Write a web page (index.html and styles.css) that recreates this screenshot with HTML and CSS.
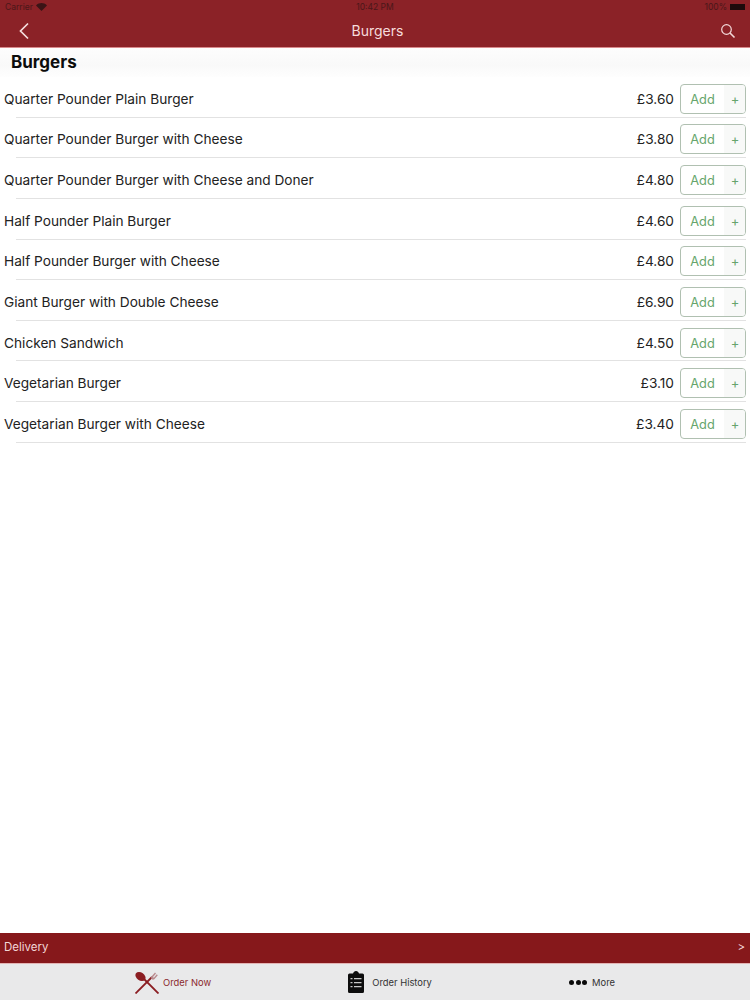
FILE: index.html
```html
<!DOCTYPE html>
<html lang="en">
<head>
  <meta charset="UTF-8">
  <title>Burgers</title>
  <link rel="stylesheet" href="styles.css">
</head>
<body>
  <div class="page">
    <header class="topbar">
      <div class="status">
        <span class="status-left">Carrier
          <svg class="wifi" width="11" height="8" viewBox="0 0 11 8"><path d="M5.500 8 0 2.400C3.200-.8 7.800-.8 11 2.400z" fill="#3a1416"/></svg>
        </span>
        <span class="status-time">10:42 PM</span>
        <span class="status-right">100%<span class="battery"></span></span>
      </div>
      <div class="nav">
        <svg class="nav-icon" width="12" height="18" viewBox="0 0 12 18"><path d="M10 1.500 2.500 9l7.500 7.500" fill="none" stroke="#f6dfdf" stroke-width="1.700"/></svg>
        <span class="nav-title">Burgers</span>
        <svg class="nav-icon" width="16" height="16" viewBox="0 0 16 16"><circle cx="6.500" cy="6.500" r="4.800" fill="none" stroke="#f3d9d9" stroke-width="1.200"/><path d="m10 10 4.500 4.500" stroke="#f3d9d9" stroke-width="1.600"/></svg>
      </div>
    </header>

    <h1 class="section-title">Burgers</h1>

    <ul class="menu">
      <li class="item"><span class="name">Quarter Pounder Plain Burger</span><span class="price">£3.60</span><button class="add"><span class="add-label">Add</span><span class="add-plus">+</span></button></li>
      <li class="item"><span class="name">Quarter Pounder Burger with Cheese</span><span class="price">£3.80</span><button class="add"><span class="add-label">Add</span><span class="add-plus">+</span></button></li>
      <li class="item"><span class="name">Quarter Pounder Burger with Cheese and Doner</span><span class="price">£4.80</span><button class="add"><span class="add-label">Add</span><span class="add-plus">+</span></button></li>
      <li class="item"><span class="name">Half Pounder Plain Burger</span><span class="price">£4.60</span><button class="add"><span class="add-label">Add</span><span class="add-plus">+</span></button></li>
      <li class="item"><span class="name">Half Pounder Burger with Cheese</span><span class="price">£4.80</span><button class="add"><span class="add-label">Add</span><span class="add-plus">+</span></button></li>
      <li class="item"><span class="name">Giant Burger with Double Cheese</span><span class="price">£6.90</span><button class="add"><span class="add-label">Add</span><span class="add-plus">+</span></button></li>
      <li class="item"><span class="name">Chicken Sandwich</span><span class="price">£4.50</span><button class="add"><span class="add-label">Add</span><span class="add-plus">+</span></button></li>
      <li class="item"><span class="name">Vegetarian Burger</span><span class="price">£3.10</span><button class="add"><span class="add-label">Add</span><span class="add-plus">+</span></button></li>
      <li class="item"><span class="name">Vegetarian Burger with Cheese</span><span class="price">£3.40</span><button class="add"><span class="add-label">Add</span><span class="add-plus">+</span></button></li>
    </ul>

    <div class="delivery"><span>Delivery</span><span>&gt;</span></div>

    <nav class="tabs">
      <a class="tab tab-active">
        <svg width="24" height="24" viewBox="0 0 24 24">
          <path d="M23.500 23.500 7 7" stroke="#8b1d22" stroke-width="1.800"/>
          <ellipse cx="5.500" cy="6.500" rx="5.500" ry="4" transform="rotate(35 5.500 6.500)" fill="#8b1d22"/>
          <path d="M.5 23.500 17 7" stroke="#8b1d22" stroke-width="1.800"/>
          <path d="m16 7 4-4.500 1 1-3 3.500.8.8 3-3.500 1 1-3.500 4c-1.500 1-3 .4-3.300-2.300z" fill="#b98a8d"/>
        </svg>
        <span>Order Now</span>
      </a>
      <a class="tab tab-history">
        <svg width="16" height="22" viewBox="0 0 16 22">
          <path d="M1.500 2.500H5C5.500 1 6.500 0 8 0s2.500 1 3 2.500h3.500A1.500 1.500 0 0 1 16 4v16.500a1.500 1.500 0 0 1-1.500 1.500h-13A1.500 1.500 0 0 1 0 20.500V4a1.500 1.500 0 0 1 1.500-1.500z" fill="#0d0d0d"/>
          <path d="M2.500 7h2v1.300h-2zM6 7h7.500v1.300H6zM2.500 11h2v1.300h-2zM6 11h7.500v1.300H6zM2.500 15h2v1.300h-2zM6 15h7.500v1.300H6z" fill="#c9c9c9"/>
        </svg>
        <span>Order History</span>
      </a>
      <a class="tab">
        <span class="dots"><i></i><i></i><i></i></span>
        <span>More</span>
      </a>
    </nav>
  </div>
</body>
</html>
```

FILE: styles.css
```css
* {
  box-sizing: border-box;
}
body {
  margin: 0;
  font-family: Inter, "Liberation Sans", sans-serif;
  color: #222;
  background-color: #fff;
}
.page {
  display: flex;
  flex-direction: column;
  height: 1000px;
}
.topbar {
  height: 48px;
  background-color: #8b2227;
  border-bottom: 1px solid #d98a8c;
  padding: 0 5px;
}
.status {
  display: flex;
  justify-content: space-between;
  align-items: center;
  height: 14px;
  font-size: 8.500px;
  color: #4a1719;
}
.status-left,
.status-right {
  display: flex;
  align-items: center;
  gap: 3px;
  width: 60px;
}
.status-right {
  justify-content: flex-end;
}
.battery {
  width: 15px;
  height: 6px;
  background-color: #1d0a0b;
}
.nav {
  display: flex;
  align-items: center;
  height: 33px;
  padding: 0 9px 0 13px;
}
.nav-title {
  flex: 1;
  padding-left: 5px;
  text-align: center;
  font-size: 14px;
  color: #f6dcdc;
}
.section-title {
  margin: 0;
  height: 29px;
  padding-left: 11px;
  font-size: 17px;
  line-height: 28px;
  font-weight: 700;
  color: #0c0c0c;
  background: linear-gradient(#fdfdfd, #f9f9f9 60%, #fefefe);
}
.menu {
  flex: 1;
  margin: 0;
  padding: 0;
  list-style: none;
}
.item {
  display: flex;
  align-items: center;
  height: 40.630px;
  padding: 3px 4px 0;
  position: relative;
}
.item::after {
  content: "";
  position: absolute;
  left: 16px;
  right: 4px;
  bottom: 0;
  border-bottom: 1px solid #e2e2e2;
}
.name {
  flex: 1;
  font-size: 13.680px;
}
.price {
  margin-right: 6px;
  font-size: 13.680px;
}
.add {
  display: flex;
  align-items: stretch;
  width: 66px;
  height: 30px;
  margin: 0;
  padding: 0;
  font-family: inherit;
  color: #66a56c;
  background-color: #fff;
  border: 1px solid #b0c0b1;
  border-radius: 4px;
  overflow: hidden;
}
.add-label {
  flex: 1;
  font-size: 12.800px;
  line-height: 29px;
}
.add-plus {
  width: 21px;
  padding-left: 1px;
  font-size: 13px;
  line-height: 29px;
  background-color: #f8f9f8;
}
.delivery {
  display: flex;
  justify-content: space-between;
  align-items: center;
  height: 31px;
  padding: 0 5px 2px 4px;
  font-size: 11.500px;
  color: #f2d6d6;
  background-color: #86181b;
  border-bottom: 1px solid #e3b4b4;
}
.tabs {
  display: flex;
  justify-content: space-between;
  height: 36px;
  padding: 0 135px;
  background-color: #e9e9ea;
}
.tab {
  display: flex;
  align-items: center;
  gap: 4px;
  font-size: 9.400px;
  color: #333;
}
.tab-active {
  color: #8b2a2e;
}
.tab-history {
  gap: 8px;
}
.dots {
  display: flex;
  gap: 1.500px;
  margin-right: 1px;
}
.dots i {
  width: 5px;
  height: 5px;
  border-radius: 50%;
  background-color: #0a0a0a;
}
```
